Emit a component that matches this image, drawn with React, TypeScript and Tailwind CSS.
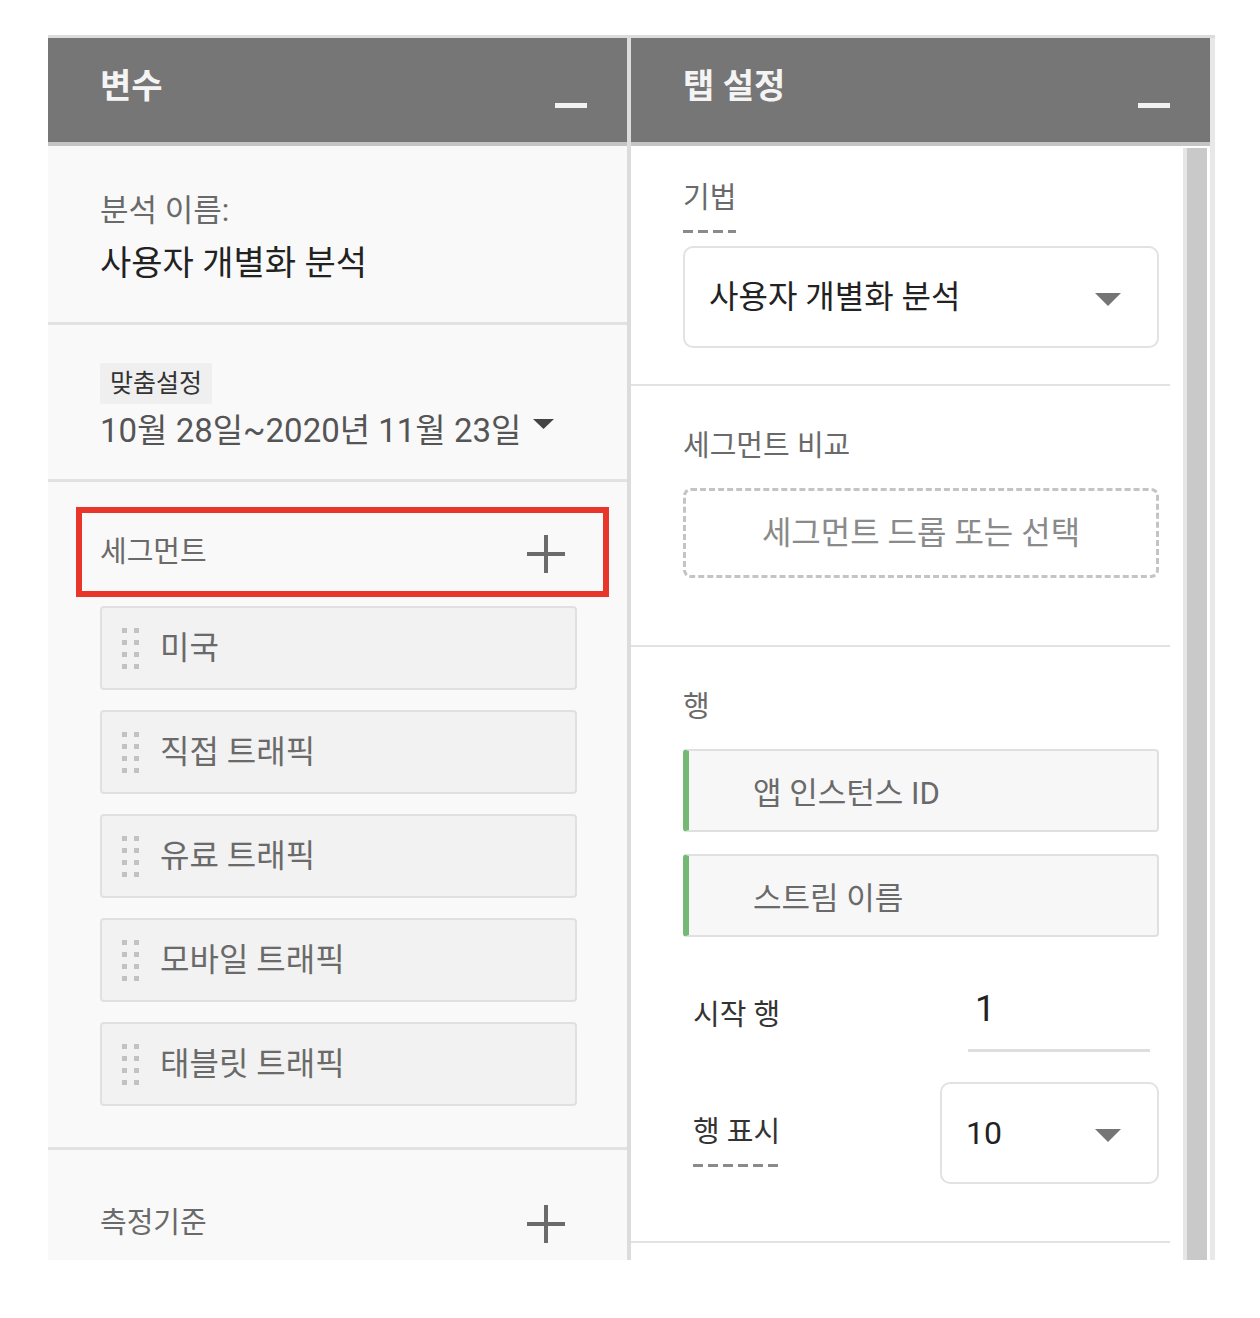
import React from "react";

const FONT = { fontFamily: '"Roboto", "Noto Sans CJK KR", sans-serif' };

function Minus() {
  return <span className="block h-[5px] w-[32px] bg-[#f2f2f2]" />;
}

function Plus() {
  return (
    <svg width="38" height="38" viewBox="0 0 38 38" aria-hidden>
      <rect x="17" y="0" width="4" height="38" fill="#6b6b6b" />
      <rect x="0" y="17" width="38" height="4" fill="#6b6b6b" />
    </svg>
  );
}

function Caret({ w = 26, h = 13, color = "#757575" }: { w?: number; h?: number; color?: string }) {
  return (
    <svg width={w} height={h} viewBox={`0 0 ${w} ${h}`} aria-hidden>
      <path d={`M0 0 L${w} 0 L${w / 2} ${h} Z`} fill={color} />
    </svg>
  );
}

function DragHandle() {
  return (
    <span className="grid grid-cols-2 gap-x-[7px] gap-y-[7px]">
      {Array.from({ length: 8 }).map((_, i) => (
        <span key={i} className="block h-[5px] w-[5px] bg-[#c2c2c2]" />
      ))}
    </span>
  );
}

const segments = ["미국", "직접 트래픽", "유료 트래픽", "모바일 트래픽", "태블릿 트래픽"];

function Header({ title }: { title: string }) {
  return (
    <div className="flex h-[104px] items-start justify-between bg-[#767676] pl-[52px] pr-[40px]">
      <span className="mt-[26px] text-[34px] leading-[44px] font-bold text-[#f4f4f4]">{title}</span>
      <span className="mt-[65px]">
        <Minus />
      </span>
    </div>
  );
}

function VariablesColumn() {
  return (
    <div className="flex w-[579px] flex-col">
      <Header title="변수" />
      <div className="h-[4px] bg-[#c4c4c4]" />
      <div className="flex flex-1 flex-col bg-[#f9f9f9]">
        <div className="flex h-[176px] flex-col pl-[52px] pt-[43px]">
          <span className="text-[31px] leading-[44px] text-[#6a6a6a]">분석 이름:</span>
          <span className="mt-[8px] text-[34px] leading-[44px] text-[#222]">사용자 개별화 분석</span>
        </div>
        <div className="h-[3px] bg-[#e2e2e2]" />
        <div className="flex h-[154px] flex-col items-start pl-[52px] pt-[38px]">
          <span className="rounded-[2px] bg-[#efefef] px-[10px] text-[25px] leading-[41px] text-[#333]">맞춤설정</span>
          <span className="mt-[5px] flex items-center gap-[12px] text-[33px] leading-[44px] text-[#555]">
            10월 28일~2020년 11월 23일
            <span className="mb-[14px]">
              <Caret w={21} h={10} color="#444" />
            </span>
          </span>
        </div>
        <div className="h-[3px] bg-[#e2e2e2]" />
        <div className="flex flex-col pt-[25px] pb-[41px]">
          <div className="ml-[28px] mr-[18px] flex h-[90px] items-center justify-between border-[6px] border-[#e8362a] pl-[18px] pr-[38px]">
            <span className="mt-[2px] text-[29px] text-[#6a6a6a]">세그먼트</span>
            <span className="mt-[4px]">
              <Plus />
            </span>
          </div>
          <div className="mt-[9px] flex flex-col gap-[20px] pl-[52px] pr-[50px]">
            {segments.map((s) => (
              <div
                key={s}
                className="flex h-[84px] items-center gap-[21px] rounded-[4px] border-2 border-[#e0e0e0] bg-[#f2f2f2] pl-[20px]"
              >
                <DragHandle />
                <span className="text-[32px] text-[#6a6a6a]">{s}</span>
              </div>
            ))}
          </div>
        </div>
        <div className="h-[3px] bg-[#e2e2e2]" />
        <div className="flex items-center justify-between pl-[52px] pr-[62px] pt-[52px]">
          <span className="text-[29px] text-[#6a6a6a]">측정기준</span>
          <Plus />
        </div>
      </div>
    </div>
  );
}

function DashedLabel({ children, className = "" }: { children: React.ReactNode; className?: string }) {
  return (
    <span className={`inline-flex flex-col ${className}`}>
      <span>{children}</span>
      <span className="h-[3px] bg-[repeating-linear-gradient(to_right,#8a8a8a_0_10px,transparent_10px_15px)]" />
    </span>
  );
}

function TabSettingsColumn() {
  return (
    <div className="flex w-[579px] flex-col">
      <Header title="탭 설정" />
      <div className="h-[4px] bg-[#c4c4c4]" />
      <div className="flex flex-1 bg-white">
        <div className="flex w-[539px] flex-col">
          <div className="flex h-[238px] flex-col items-start pl-[52px] pr-[11px] pt-[30px]">
            <DashedLabel className="ml-[-3px] pl-[3px] text-[29px] leading-[44px] text-[#6a6a6a]">
              <span className="mb-[10px] block">기법</span>
            </DashedLabel>
            <div className="mt-[13px] flex h-[102px] w-full items-center justify-between rounded-[10px] border-2 border-[#e2e2e2] pl-[24px] pr-[36px]">
              <span className="text-[32px] text-[#222]">사용자 개별화 분석</span>
              <span className="mt-[4px]">
                <Caret />
              </span>
            </div>
          </div>
          <div className="h-[2px] bg-[#e2e2e2]" />
          <div className="flex h-[259px] flex-col pl-[52px] pr-[11px] pt-[38px]">
            <span className="text-[29px] leading-[44px] text-[#6a6a6a]">세그먼트 비교</span>
            <div className="mt-[20px] flex h-[90px] items-center justify-center rounded-[8px] border-[3px] border-dashed border-[#c4c4c4]">
              <span className="text-[32px] text-[#8a8a8a]">세그먼트 드롭 또는 선택</span>
            </div>
          </div>
          <div className="h-[2px] bg-[#e2e2e2]" />
          <div className="flex h-[594px] flex-col pl-[52px] pr-[11px] pt-[38px]">
            <span className="text-[29px] leading-[44px] text-[#6a6a6a]">행</span>
            <div className="mt-[20px] flex flex-col gap-[22px]">
              {["앱 인스턴스 ID", "스트림 이름"].map((r) => (
                <div
                  key={r}
                  className="flex h-[83px] items-center rounded-[4px] border-2 border-l-[6px] border-[#e0e0e0] border-l-[#73b973] bg-[#f7f7f7] pl-[64px] pt-[8px]"
                >
                  <span className="text-[31px] text-[#6a6a6a]">{r}</span>
                </div>
              ))}
            </div>
            <div className="mt-[48px] flex items-start justify-between pl-[10px] pr-[9px]">
              <span className="mt-[8px] text-[29px] leading-[44px] text-[#333]">시작 행</span>
              <div className="flex w-[182px] flex-col">
                <span className="pl-[7px] text-[36px] leading-[48px] text-[#222]">1</span>
                <span className="mt-[16px] h-[3px] bg-[#dedede]" />
              </div>
            </div>
            <div className="mt-[30px] flex items-center justify-between pl-[10px]">
              <DashedLabel className="mt-[10px] text-[29px] leading-[44px] text-[#333]">
                <span className="mb-[10px] block">행 표시</span>
              </DashedLabel>
              <div className="flex h-[102px] w-[219px] items-center justify-between rounded-[10px] border-2 border-[#e2e2e2] pl-[24px] pr-[36px]">
                <span className="text-[32px] text-[#222]">10</span>
                <span className="mt-[4px]">
                  <Caret />
                </span>
              </div>
            </div>
          </div>
          <div className="h-[2px] bg-[#e2e2e2]" />
        </div>
        <div className="ml-[13px] mt-[2px] flex w-[24px]">
          <span className="w-[4px] bg-[#e6e6e6]" />
          <span className="w-[20px] bg-[#c9c9c9]" />
        </div>
        <div className="w-[3px]" />
      </div>
    </div>
  );
}

export default function App() {
  return (
    <div className="min-h-[1318px] bg-white pl-[48px] pt-[35px]" style={FONT}>
      <div className="flex h-[1225px] w-[1167px] flex-col overflow-hidden">
        <div className="h-[3px] bg-[#dcdcdc]" />
        <div className="flex flex-1">
          <VariablesColumn />
          <div className="w-[4px] bg-[#dcdcdc]" />
          <TabSettingsColumn />
          <div className="w-[5px] bg-[#e8e8e8]" />
        </div>
      </div>
    </div>
  );
}
